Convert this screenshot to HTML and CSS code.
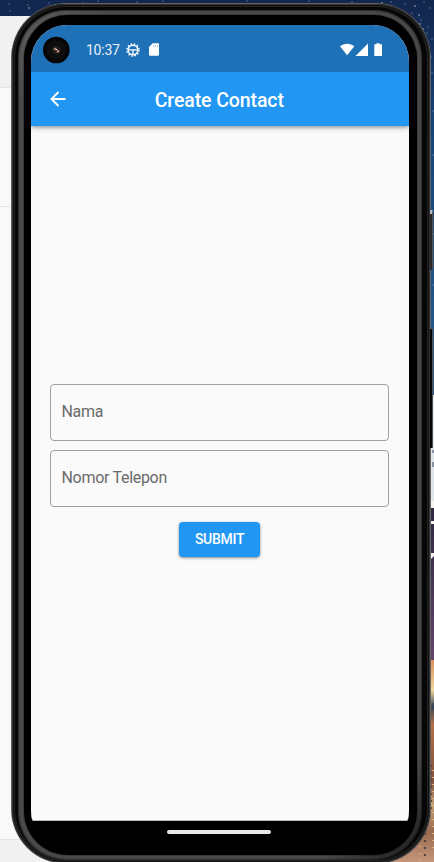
FILE: index.html
```html
<!DOCTYPE html>
<html lang="id">
<head>
<meta charset="utf-8">
<title>Create Contact</title>
<link rel="stylesheet" href="styles.css">
</head>
<body>
<svg class="wallpaper" viewBox="0 0 434 862" aria-hidden="true">
  <defs>
    <linearGradient id="sky" x1="0" y1="0" x2="0" y2="1">
      <stop offset="0" stop-color="#13264d"/><stop offset=".12" stop-color="#14305c"/>
      <stop offset=".3" stop-color="#174477"/><stop offset="1" stop-color="#275d91"/>
    </linearGradient>
    <linearGradient id="dusk" x1="0" y1="0" x2="0" y2="1">
      <stop offset="0" stop-color="#2d2740"/><stop offset="1" stop-color="#63466b"/>
    </linearGradient>
    <linearGradient id="ground" x1="0" y1="0" x2="0" y2="1">
      <stop offset="0" stop-color="#d98f5b"/><stop offset=".15" stop-color="#f0d79c"/>
      <stop offset=".23" stop-color="#3c4658"/><stop offset=".32" stop-color="#b37046"/>
      <stop offset=".6" stop-color="#80513e"/><stop offset=".72" stop-color="#c3a277"/>
      <stop offset=".85" stop-color="#99694e"/><stop offset="1" stop-color="#c6967b"/>
    </linearGradient>
  </defs>
  <path fill="url(#sky)" d="M0 0h434v400H0z"/>
  <path fill="#dfe5e8" d="M420 395h14v117h-14z"/>
  <path fill="url(#dusk)" d="M420 502h14v160h-14z"/>
  <path fill="url(#ground)" d="M380 660h54v202h-54z"/>
  <path fill="#f1f1f1" d="M0 16h40v846H0z"/>
  <path fill="#f9f9f9" d="M0 88h40v751H0z"/>
  <path stroke="#e4e4e4" d="M0 87.500h40M0 206.500h40M0 839.500h40"/>
  <path stroke="#8aa6c8" stroke-width="1" stroke-linecap="square" d="M9 4h0M28 5h0M49 3h0M10 11h0M83 3h0M98 1h0M137 2h0M163 1h0M247 1h0M309 1h0M352 2h0M378 4h0M391 2h0M398 9h0M405 4h0M412 13h0M424 2h0M430 8h0M421 20h0M428 27h0M432 39h0M425 42h0M431 57h0M427 33h0M432 73h0M433 111h0M433 155h0M433 234h0M433 285h0"/>
  <path stroke="#fff" stroke-width="1.200" stroke-linecap="square" d="M382 3h0M415 6h0M419 15h0M420 24h0M29 8h0M423 29h0"/>
  <path fill="#f7f4ef" d="M431 501h3v7h-3zM431 521h3v3h-3zM431 553h3v3l-3 3z"/>
  <path stroke="#344159" d="M433 450v3M433 462v5M433 703v7"/>
  <path stroke="#54413b" stroke-width="2" stroke-dasharray="2 5" d="M431 765v45M425 826v33"/>
  <path stroke="#e1b07e" stroke-width="2" stroke-dasharray="1 6" d="M433 770v80M420 846v16"/>
</svg>
<div class="phone">
  <div class="rim">
    <div class="band">
      <div class="bezel">
        <main class="screen">
          <header class="status">
            <svg class="camera" viewBox="0 0 28 28">
              <circle cx="14.300" cy="14" r="13.300" fill="#050505"/>
              <circle cx="14.300" cy="14" r="10" fill="#0d0d0d"/>
              <circle cx="14.300" cy="14" r="4" fill="#231d1c"/>
              <path stroke="#b98c79" stroke-width="2.200" d="M12 12.500l2 1M15 14.500l2 1.500"/>
              <path fill="#eee" d="M14 13h1v1h-1z"/>
            </svg>
            <span class="time">10:37</span>
            <svg class="gear" viewBox="0 0 14 14" fill="none" stroke="#fff">
              <circle cx="7" cy="7" r="4.800" stroke-width="1.500"/>
              <circle cx="7" cy="7" r="6.100" stroke-width="1.400" stroke-dasharray="1.500 1.694"/>
              <path d="M2.500 6.800h9M7 7v4.500" stroke-width="1.300"/>
            </svg>
            <svg class="card" viewBox="0 0 10 13">
              <path fill="#fff" d="M3.700.3H9a1 1 0 0 1 1 1v10.400a1 1 0 0 1-1 1H1a1 1 0 0 1-1-1V4z"/>
              <path stroke="#a9c8e4" d="M4.500 2v2M6.500 2v2M8.500 2v2"/>
            </svg>
            <svg class="signals" viewBox="0 0 44 14" fill="#fff">
              <path d="M0 3.300C4.300-.1 10-.1 14.300 3.300L7.150 12.300z"/>
              <path d="M28 .5v12.500H15.500z"/>
              <path d="M36.500.3h3v1H42v11.700h-7.700V1.300h2.200z"/>
            </svg>
          </header>
          <div class="appbar">
            <svg class="back" viewBox="0 0 16 16" fill="none" stroke="#fff" stroke-width="1.900">
              <path d="M15.500 8H1.800M8.500 1L1.500 8l7 7"/>
            </svg>
            <h1 class="title">Create Contact</h1>
          </div>
          <form class="form">
            <div class="field">Nama</div>
            <div class="field">Nomor Telepon</div>
            <button class="submit" type="button">SUBMIT</button>
          </form>
        </main>
        <div class="pill"></div>
      </div>
    </div>
  </div>
  <div class="key power"></div>
  <div class="key volume"></div>
</div>
</body>
</html>
```
FILE: styles.css
```css
* { box-sizing: border-box; }
body {
  margin: 0;
  height: 862px;
  overflow: hidden;
  position: relative;
  background: #f9f9f9;
  font-family: Roboto, sans-serif;
}
svg { display: block; flex: none; }
.wallpaper { position: absolute; inset: 0; width: 434px; height: 862px; }
.phone {
  position: relative;
  width: 420px;
  height: 861px;
  margin: 3px 0 0 11px;
  padding: 1px;
  border-radius: 55px;
  background: #626262;
}
.rim {
  height: 859px;
  padding: 6px 8px 3px 6px;
  border-radius: 54px;
  background: #060606;
  box-shadow: inset 0 0 0 1px #333, inset 0 0 0 2px #111, inset 0 0 0 3px #242424;
}
.band {
  height: 850px;
  padding: 5px 5px 5px 6px;
  border-radius: 48px;
  background: linear-gradient(135deg, #626262 0, #4c4c4c 8%, #4c4c4c 92%, #1c1c1c 100%);
  box-shadow: inset 0 0 3px #000;
}
.bezel {
  height: 840px;
  padding: 10px 8px 0 7px;
  border-radius: 44px;
  background: #000;
  box-shadow: 0 0 2px #000;
}
.screen {
  display: flex;
  flex-direction: column;
  width: 378px;
  height: 796px;
  overflow: hidden;
  border-radius: 36px 36px 2px 2px / 36px 36px 11px 11px;
  border-bottom: 1px solid #bbb;
  background: #fafafa;
}
.status {
  position: relative;
  z-index: 1;
  display: flex;
  align-items: center;
  height: 47px;
  flex: none;
  padding: 2px 25px 0 11px;
  background: #1e70b7;
  color: #fff;
}
.camera { width: 28px; height: 28px; }
.time { width: 40px; margin-left: 16px; font-size: 14px; line-height: 16px; letter-spacing: -.25px; color: #e8f1f8; }
.gear { width: 14px; height: 14px; }
.card { width: 10px; height: 13px; margin-left: 9px; }
.signals { width: 44px; height: 14px; margin-left: auto; }
.appbar {
  display: grid;
  grid-template-columns: 16px 1fr 16px;
  align-items: center;
  height: 54px;
  flex: none;
  padding: 0 20px 0 18.5px;
  background: #2196f3;
  box-shadow: 0 1px 5px rgba(0, 0, 0, .5);
}
.back { width: 16px; height: 16px; }
.title { margin: 3px 0 0; text-align: center; color: #fff; font-size: 19.5px; line-height: 24px; font-weight: 500; letter-spacing: -.1px; }
.form { display: flex; flex-direction: column; padding: 257.5px 20px 0 19px; }
.field {
  height: 57px;
  margin-bottom: 9px;
  padding: 0 10.5px;
  border: 1px solid #a0a0a0;
  border-radius: 4px;
  color: #6a6a6a;
  font-size: 16px;
  line-height: 54px;
  letter-spacing: -.3px;
}
.submit {
  align-self: center;
  width: 81px;
  height: 35px;
  margin-top: 6px;
  padding: 0;
  border: 0;
  border-radius: 4px;
  background: #2196f3;
  color: #fff;
  font: 500 14px/35px Roboto, sans-serif;
  letter-spacing: -.3px;
  box-shadow: 0 1px 3px rgba(0, 0, 0, .45);
}
.pill { width: 104px; height: 4px; margin: 9px auto 0; border-radius: 2px; background: #e8e8e8; transform: translateX(-1px); }
.key { position: absolute; left: 419px; width: 3px; border-right: 1px solid #555; border-radius: 1px; }
.power { top: 207px; height: 60px; background: #292929; border-top: 4px solid #bbb; }
.volume { top: 326px; height: 119px; background: #050505; }
```
